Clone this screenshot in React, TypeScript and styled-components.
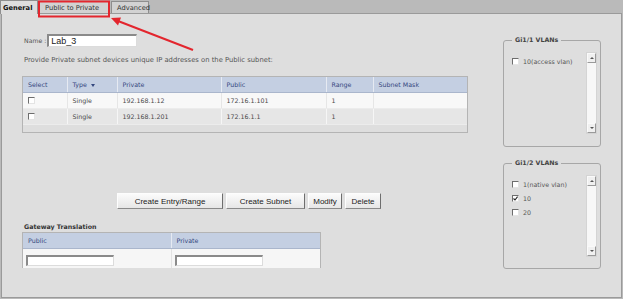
import React from 'react'
import styled, { createGlobalStyle } from 'styled-components'

const GlobalStyle = createGlobalStyle`
  body {
    margin: 0;
    font-family: "DejaVu Sans", Verdana, sans-serif;
  }
`

const Page = styled.div`
  position: relative;
  width: 623px;
  height: 299px;
  background: #bababa;
  overflow: hidden;
  display: flex;
  flex-direction: column;
`

const TabBar = styled.div`
  display: flex;
  align-items: flex-end;
  height: 13px;
  position: relative;
  z-index: 1;
`

const Tab = styled.div<{ $active?: boolean; $w: number }>`
  box-sizing: border-box;
  width: ${p => p.$w}px;
  height: ${p => (p.$active ? 14 : 12)}px;
  margin-bottom: ${p => (p.$active ? -1 : 0)}px;
  margin-right: 1px;
  padding-left: ${p => (p.$active ? 2 : 5)}px;
  display: flex;
  align-items: center;
  font-size: 6.7px;
  font-weight: ${p => (p.$active ? 'bold' : 'normal')};
  color: ${p => (p.$active ? '#111' : '#333')};
  background: ${p => (p.$active ? '#dedede' : '#d2d2d2')};
  border: 1px solid #8e8e8e;
  border-bottom: none;
  white-space: nowrap;
`

const Panel = styled.div`
  flex: 1;
  display: flex;
  margin: 0 1px 1px 1px;
  background: #dedede;
  border: 1px solid #9a9a9a;
`

const Main = styled.div`
  flex: 1;
  padding: 20px 0 0 20px;
  display: flex;
  flex-direction: column;
`

const NameRow = styled.div`
  display: flex;
  align-items: center;
  height: 13px;
  padding-left: 2px;
`

const Label = styled.span`
  font-size: 6.2px;
  color: #555;
  margin-right: 1px;
  white-space: nowrap;
`

const TextInput = styled.input<{ $w: number; $h: number }>`
  box-sizing: border-box;
  width: ${p => p.$w}px;
  height: ${p => p.$h}px;
  margin: 0;
  padding: 0 2px;
  font-family: "Liberation Sans", Arial, sans-serif;
  font-size: 9px;
  color: #222;
  background: #fff;
  border-style: solid;
  border-width: 2px 1px 1px 2px;
  border-color: #8a8a8a #dcdcdc #dcdcdc #8a8a8a;
  outline: none;
`

const Description = styled.div`
  margin-top: 9px;
  padding-left: 2px;
  height: 9px;
  line-height: 9px;
  font-size: 6.8px;
  color: #555;
`

const TableBox = styled.div<{ $w: number; $h: number }>`
  box-sizing: border-box;
  width: ${p => p.$w}px;
  height: ${p => p.$h}px;
  border: 1px solid #b4b4b4;
  background: #dedede;
`

const Grid = styled.table`
  width: 100%;
  border-collapse: collapse;
  table-layout: fixed;
`

const Th = styled.th<{ $w?: number }>`
  box-sizing: border-box;
  width: ${p => (p.$w ? `${p.$w}px` : 'auto')};
  height: 15px;
  padding: 0 0 0 5px;
  background: #c4cfe2;
  color: #34477e;
  font-size: 6.3px;
  font-weight: normal;
  text-align: left;
  border-right: 1px solid #e6eaf2;
  border-bottom: 1px solid #aab6cc;
  &:last-child {
    border-right: none;
  }
`

const Tr = styled.tr<{ $alt?: boolean }>`
  background: ${p => (p.$alt ? '#e6e6e6' : '#f8f8f8')};
`

const Td = styled.td<{ $alt?: boolean }>`
  box-sizing: border-box;
  height: 16px;
  padding: 0 0 0 5px;
  font-size: 6.3px;
  color: #484848;
  border-right: 1px solid ${p => (p.$alt ? '#f6f6f6' : '#e6e6e6')};
  border-bottom: 1px solid #ececec;
  &:last-child {
    border-right: none;
  }
`

const SortArrow = styled.span`
  display: inline-block;
  margin-left: 4px;
  vertical-align: middle;
  border-left: 2.5px solid transparent;
  border-right: 2.5px solid transparent;
  border-top: 3px solid #34477e;
`

const Check = styled.span`
  box-sizing: border-box;
  display: inline-flex;
  flex-shrink: 0;
  align-items: center;
  justify-content: center;
  width: 7px;
  height: 7px;
  background: #fff;
  border-style: solid;
  border-width: 1px;
  border-color: #6d6d6d #e4e4e4 #e4e4e4 #6d6d6d;
  vertical-align: middle;
`

const ButtonRow = styled.div`
  display: flex;
  gap: 3px;
  margin: 60px 0 0 95px;
`

const Button = styled.button<{ $w: number }>`
  box-sizing: border-box;
  width: ${p => p.$w}px;
  height: 16px;
  margin: 0;
  padding: 0;
  font-family: "Liberation Sans", Arial, sans-serif;
  font-size: 8px;
  color: #222;
  background: linear-gradient(#fbfbfb, #e6e6e6);
  border-style: solid;
  border-width: 1px;
  border-color: #fdfdfd #6e6e6e #8a8a8a #fdfdfd;
`

const SectionTitle = styled.div`
  margin-top: 13px;
  padding-left: 2px;
  height: 9px;
  line-height: 9px;
  font-size: 6.3px;
  font-weight: bold;
  color: #333;
`

const GatewayCell = styled.td`
  box-sizing: border-box;
  height: 19px;
  padding: 0 0 0 3px;
  background: #f6f6f6;
  border-right: 1px solid #e2e2e2;
  &:last-child {
    border-right: none;
  }
`

const Side = styled.div`
  flex: 0 0 98px;
  width: 98px;
  min-width: 0;
  padding: 22px 20px 0 0;
  display: flex;
  flex-direction: column;
  gap: 12px;
`

const VlanSet = styled.fieldset<{ $h: number }>`
  box-sizing: border-box;
  width: 98px;
  min-width: 0;
  height: ${p => p.$h}px;
  margin: 0;
  padding: 8px 3px 0 8px;
  border: 1px solid #a7a7a7;
  border-radius: 3px;
  display: flex;
`

const Legend = styled.legend`
  margin-left: 0;
  padding: 0 3px;
  height: 8px;
  line-height: 8px;
  font-size: 6.3px;
  font-weight: bold;
  color: #444;
  white-space: nowrap;
`

const VlanList = styled.div`
  flex: 1;
  min-width: 0;
  display: flex;
  flex-direction: column;
  padding-top: 2px;
`

const VlanItem = styled.div`
  display: flex;
  align-items: center;
  height: 14px;
  font-size: 6.3px;
  color: #555;
  gap: 4px;
  white-space: nowrap;
`

const ScrollTrack = styled.div`
  box-sizing: border-box;
  flex-shrink: 0;
  width: 11px;
  height: 82px;
  display: flex;
  flex-direction: column;
  justify-content: space-between;
  background: #f7f7f7;
  border: 1px solid #d4d4d4;
`

const ScrollButton = styled.div`
  box-sizing: border-box;
  height: 10px;
  display: flex;
  align-items: center;
  justify-content: center;
  background: #f0f0f0;
  border-style: solid;
  border-width: 1px;
  border-color: #fafafa #9a9a9a #9a9a9a #fafafa;
`

const Arrow = styled.span<{ $down?: boolean }>`
  width: 0;
  height: 0;
  border-left: 2px solid transparent;
  border-right: 2px solid transparent;
  ${p => (p.$down ? 'border-top: 2px solid #555;' : 'border-bottom: 2px solid #555;')}
`

const Annotation = styled.svg`
  position: absolute;
  left: 0;
  top: 0;
  z-index: 2;
  pointer-events: none;
`

const rows = [
  { type: 'Single', priv: '192.168.1.12', pub: '172.16.1.101', range: '1' },
  { type: 'Single', priv: '192.168.1.201', pub: '172.16.1.1', range: '1' },
]

function CheckBox({ checked }: { checked?: boolean }) {
  return (
    <Check>
      {checked && (
        <svg width="5" height="5" viewBox="0 0 5 5">
          <path d="M0.5 2.5 L2 4 L4.6 0.6" stroke="#222" strokeWidth="1.1" fill="none" />
        </svg>
      )}
    </Check>
  )
}

function ScrollBar() {
  return (
    <ScrollTrack>
      <ScrollButton>
        <Arrow />
      </ScrollButton>
      <ScrollButton>
        <Arrow $down />
      </ScrollButton>
    </ScrollTrack>
  )
}

function Vlans({ title, items, height }: { title: string; items: { label: string; checked?: boolean }[]; height: number }) {
  return (
    <VlanSet $h={height}>
      <Legend>{title}</Legend>
      <VlanList>
        {items.map(item => (
          <VlanItem key={item.label}>
            <CheckBox checked={item.checked} />
            {item.label}
          </VlanItem>
        ))}
      </VlanList>
      <ScrollBar />
    </VlanSet>
  )
}

export default function App() {
  return (
    <Page>
      <GlobalStyle />
      <TabBar>
        <Tab $active $w={38}>General</Tab>
        <Tab $w={71}>Public to Private</Tab>
        <Tab $w={38}>Advanced</Tab>
      </TabBar>
      <Panel>
        <Main>
          <NameRow>
            <Label>Name :</Label>
            <TextInput $w={90} $h={13} defaultValue="Lab_3" />
          </NameRow>
          <Description>Provide Private subnet devices unique IP addresses on the Public subnet:</Description>
          <TableBox $w={446} $h={57} style={{ marginTop: 11 }}>
            <Grid>
              <thead>
                <tr>
                  <Th $w={44}>Select</Th>
                  <Th $w={50}>
                    Type<SortArrow />
                  </Th>
                  <Th $w={104}>Private</Th>
                  <Th $w={105}>Public</Th>
                  <Th $w={47}>Range</Th>
                  <Th>Subnet Mask</Th>
                </tr>
              </thead>
              <tbody>
                {rows.map((r, i) => (
                  <Tr key={r.priv} $alt={i % 2 === 1}>
                    <Td $alt={i % 2 === 1}>
                      <CheckBox />
                    </Td>
                    <Td $alt={i % 2 === 1}>{r.type}</Td>
                    <Td $alt={i % 2 === 1}>{r.priv}</Td>
                    <Td $alt={i % 2 === 1}>{r.pub}</Td>
                    <Td $alt={i % 2 === 1}>{r.range}</Td>
                    <Td $alt={i % 2 === 1}></Td>
                  </Tr>
                ))}
              </tbody>
            </Grid>
          </TableBox>
          <ButtonRow>
            <Button $w={106}>Create Entry/Range</Button>
            <Button $w={79}>Create Subnet</Button>
            <Button $w={34}>Modify</Button>
            <Button $w={36}>Delete</Button>
          </ButtonRow>
          <SectionTitle>Gateway Translation</SectionTitle>
          <TableBox $w={299} $h={36} style={{ marginTop: 1 }}>
            <Grid>
              <thead>
                <tr>
                  <Th $w={148}>Public</Th>
                  <Th>Private</Th>
                </tr>
              </thead>
              <tbody>
                <tr>
                  <GatewayCell>
                    <TextInput $w={88} $h={11} />
                  </GatewayCell>
                  <GatewayCell>
                    <TextInput $w={88} $h={11} />
                  </GatewayCell>
                </tr>
              </tbody>
            </Grid>
          </TableBox>
        </Main>
        <Side>
          <Vlans title="Gi1/1 VLANs" height={111} items={[{ label: '10(access vlan)' }]} />
          <Vlans
            title="Gi1/2 VLANs"
            height={110}
            items={[{ label: '1(native vlan)' }, { label: '10', checked: true }, { label: '20' }]}
          />
        </Side>
      </Panel>
      <Annotation width="623" height="299">
        <rect x="39" y="1.5" width="70" height="15" fill="none" stroke="#e3262e" strokeWidth="2" />
        <line x1="193" y1="50" x2="118" y2="21" stroke="#e3262e" strokeWidth="2" />
        <polygon points="111,18 121,17.4 118,25.4" fill="#e3262e" />
      </Annotation>
    </Page>
  )
}
